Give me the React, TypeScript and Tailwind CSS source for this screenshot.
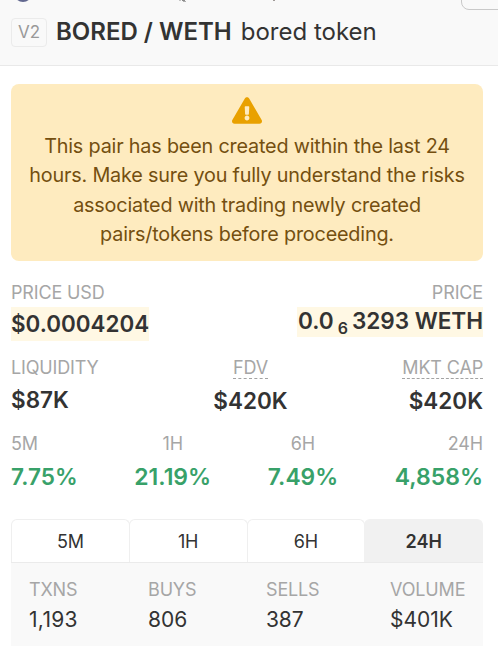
import React from "react";
import { FaExclamationTriangle } from "react-icons/fa";

const changes = [
  { label: "5M", value: "7.75%", align: "items-start", size: "text-[22.6px]" },
  { label: "1H", value: "21.19%", align: "items-center", size: "text-[23px]" },
  { label: "6H", value: "7.49%", align: "items-center", size: "text-[22.8px]" },
  { label: "24H", value: "4,858%", align: "items-end", size: "text-[23px]" },
];

const tabs = ["5M", "1H", "6H", "24H"];

const stats = [
  { label: "TXNS", value: "1,193", width: "w-[119px]", tracking: "tracking-[0.3px]" },
  { label: "BUYS", value: "806", width: "w-[118px]", tracking: "tracking-normal" },
  { label: "SELLS", value: "387", width: "w-[124px]", tracking: "tracking-[-0.1px]" },
  { label: "VOLUME", value: "$401K", width: "w-[80px]", tracking: "tracking-normal" },
];

function Label({ children, dashed = false }: { children: React.ReactNode; dashed?: boolean }) {
  return (
    <div
      className={
        "h-[22px] text-[18px] leading-[22px] tracking-[-0.15px] text-[#a6a6a6] " +
        (dashed ? "border-b border-dashed border-[#a3a3a3]" : "")
      }
    >
      {children}
    </div>
  );
}

export default function App() {
  return (
    <div className="h-[646px] w-[498px] overflow-hidden bg-white font-['Inter',sans-serif] text-[#333333]">
      <header className="relative h-[66px] overflow-hidden border-b border-[#e9e9e9] bg-[#f9f9f9] pl-[11px] pt-[17px]">
        <div className="absolute -top-[16px] left-[14px] size-[18px] rounded-full bg-[#62688f]" />
        <div className="absolute left-[179px] top-0 h-px w-[2px] bg-[#c4c4c4]" />
        <div className="absolute left-[182px] top-0 h-px w-[3px] bg-[#8a8a8a]" />
        <div className="absolute left-[183px] top-px h-px w-[3px] bg-[#b0b0b0]" />
        <div className="absolute left-[273px] top-0 h-px w-[2px] bg-[#a09a98]" />
        <div className="absolute -top-[30px] left-[461px] h-[40px] w-[60px] rounded-[8px] border border-[#c9c9c9]" />
        <div className="flex items-center">
          <span className="flex h-[29px] w-[36px] items-center justify-center rounded-[4px] border border-[#ebebeb] pt-px text-[17px] text-[#999999]">
            V2
          </span>
          <span className="ml-[9px] whitespace-nowrap text-[24px] font-semibold leading-[30px]">BORED / WETH</span>
          <span className="ml-[9px] whitespace-nowrap text-[24px] leading-[30px]">bored token</span>
        </div>
      </header>

      <main className="px-[11px] pt-[18px]">
        <div className="flex h-[177px] w-[472px] flex-col items-center rounded-[8px] bg-[#feebbf] pt-[13px] text-[#744f10]">
          <FaExclamationTriangle className="h-[27px] w-[30px] text-[#e9a100]" />
          <p className="mt-[8px] whitespace-nowrap text-center text-[19.8px] leading-[29.3px] tracking-[-0.18px]">
            This pair has been created within the last 24
            <br />
            hours. Make sure you fully understand the risks
            <br />
            associated with trading newly created
            <br />
            pairs/tokens before proceeding.
          </p>
        </div>

        <section className="mt-[21px] flex h-[75px] w-[472px] justify-between">
          <div className="flex flex-col items-start">
            <Label>PRICE USD</Label>
            <div className="mt-[3px] h-[34px] bg-[#fff8e4] text-[22.4px] font-semibold leading-[34px]">$0.0004204</div>
          </div>
          <div className="flex flex-col items-end">
            <Label>PRICE</Label>
            <div className="mt-[3px] flex h-[30px] bg-[#fff8e4] pl-px text-[22.6px] font-semibold leading-[28px]">
              <span>0.0</span>
              <span className="ml-[4px] mr-[4px] pt-[7px] text-[16px]">6</span>
              <span className="tracking-[-0.05px]">3293 WETH</span>
            </div>
          </div>
        </section>

        <section className="flex h-[75px] w-[472px] justify-between">
          <div className="flex flex-col items-start">
            <Label>LIQUIDITY</Label>
            <div className="mt-[7px] text-[22.5px] font-semibold leading-[28px]">$87K</div>
          </div>
          <div className="flex flex-col items-center">
            <Label dashed>FDV</Label>
            <div className="mt-[8px] text-[22.5px] font-semibold leading-[28px]">$420K</div>
          </div>
          <div className="flex flex-col items-end">
            <Label dashed>MKT CAP</Label>
            <div className="mt-[8px] text-[22.5px] font-semibold leading-[28px]">$420K</div>
          </div>
        </section>

        <section className="flex h-[87px] w-[472px] justify-between pt-px">
          {changes.map((c) => (
            <div key={c.label} className={"flex flex-col " + c.align}>
              <Label>{c.label}</Label>
              <div className={"mt-[8px] font-semibold leading-[28px] text-[#38a169] " + c.size}>{c.value}</div>
            </div>
          ))}
        </section>

        <section className="w-[472px]">
          <div className="flex h-[44px] border-b border-[#ebebeb]">
            {tabs.map((t) => (
              <div
                key={t}
                className={
                  "flex flex-1 items-center justify-center rounded-t-[6px] border border-b-0 pt-px text-[18px] " +
                  (t === "24H"
                    ? "border-[#f1f1f1] bg-[#f1f1f1] font-semibold"
                    : "-mr-px border-[#efefef] tracking-[-0.15px]")
                }
              >
                {t}
              </div>
            ))}
          </div>
          <div className="flex h-[86px] bg-[#f9f9f9] pl-[18px] pt-[16px]">
            {stats.map((s) => (
              <div key={s.label} className={"shrink-0 " + s.width}>
                <Label>{s.label}</Label>
                <div className={"mt-[5px] text-[21px] leading-[28px] " + s.tracking}>{s.value}</div>
              </div>
            ))}
          </div>
        </section>
      </main>
    </div>
  );
}
